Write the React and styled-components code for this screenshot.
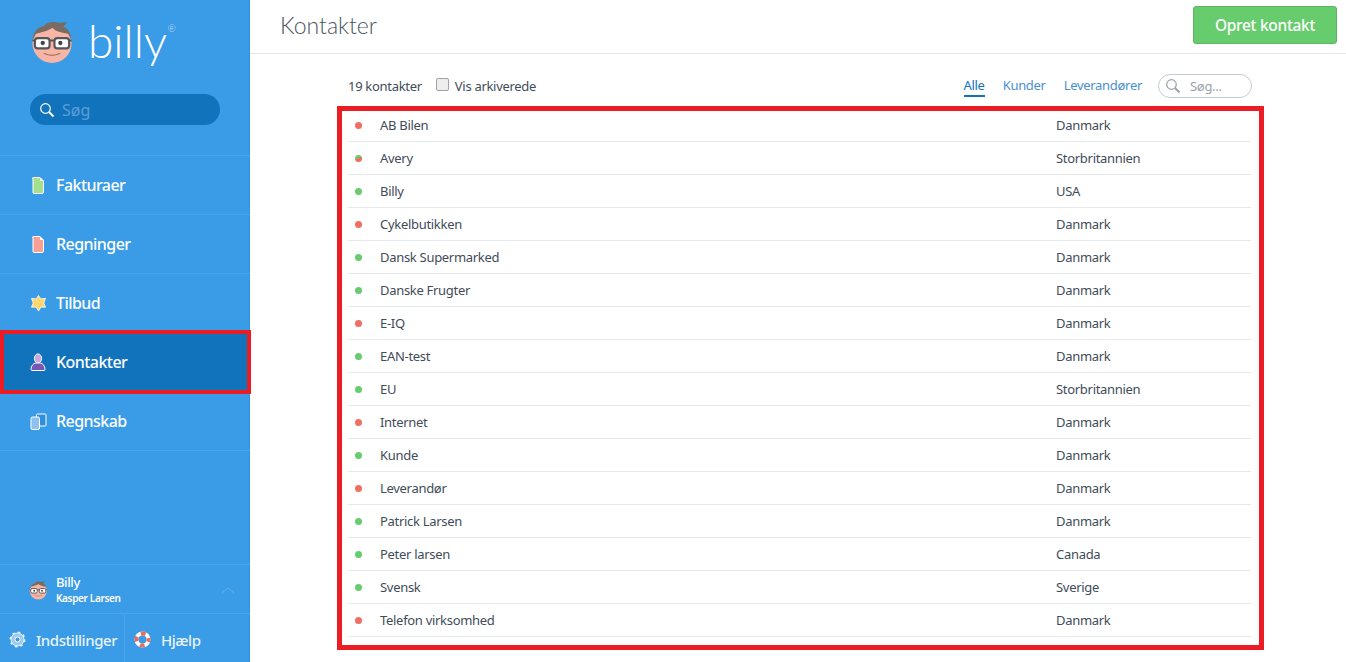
import React from "react";
import styled, { createGlobalStyle } from "styled-components";

const GlobalStyle = createGlobalStyle`
  html, body {
    margin: 0;
    padding: 0;
    height: 100%;
    overflow: hidden;
    background: #fff;
    font-family: "Noto Sans", "Open Sans", sans-serif;
  }
  * { box-sizing: border-box; }
`;

const Page = styled.div`
  display: flex;
  height: 662px;
  width: 1346px;
`;

const Sidebar = styled.aside`
  width: 250px;
  flex: none;
  background: #3a9be6;
  box-shadow: inset -1px 0 0 #3591dc;
  display: flex;
  flex-direction: column;
  color: #fff;
`;

const Logo = styled.div`
  display: flex;
  align-items: center;
  height: 94px;
  padding: 0 0 10px 31px;
`;

const LogoText = styled.span`
  font-family: "Lato", sans-serif;
  font-weight: 300;
  font-size: 46px;
  line-height: 1;
  margin-left: 14px;
  position: relative;
  top: -1px;
`;

const Registered = styled.sup`
  font-size: 10px;
  font-weight: 300;
  position: absolute;
  top: 5px;
  right: -9px;
  line-height: 1;
  opacity: 0.7;
`;

const SideSearch = styled.div`
  margin: 0 30px 0 30px;
  height: 31px;
  border-radius: 16px;
  background: #1273bd;
  display: flex;
  align-items: center;
  padding-left: 9px;
  gap: 7px;
  font-size: 16px;
  color: #5b9fd6;
`;

const Nav = styled.nav`
  margin-top: 30px;
  border-top: 1px solid #4aa4ea;
`;

const NavItem = styled.div`
  height: 59px;
  display: flex;
  align-items: center;
  padding-left: ${p => (p.$active ? "25px" : "29px")};
  gap: 9px;
  font-size: 16px;
  font-weight: 500;
  letter-spacing: -0.55px;
  border-bottom: 1px solid #4aa4ea;
  ${p => p.$active && `
    background: #1273bd;
    border: 4px solid #ec1c24;
    width: 251px;
    height: 64px;
    margin: -3px 0 -2px;
    position: relative;
  `}
`;

const IconSlot = styled.span`
  width: 18px;
  height: 18px;
  flex: none;
  display: flex;
  align-items: center;
  justify-content: center;
`;

const Spacer = styled.div`
  flex: 1;
`;

const User = styled.div`
  height: 50px;
  border-top: 1px solid #4aa4ea;
  border-bottom: 1px solid #4aa4ea;
  display: flex;
  align-items: center;
  padding: 2px 15px 0 29px;
  gap: 8px;
`;

const UserText = styled.div`
  flex: 1;
  display: flex;
  flex-direction: column;
  gap: 1px;
`;

const UserName = styled.span`
  font-size: 13px;
  font-weight: 500;
  line-height: 15px;
  letter-spacing: -0.4px;
`;

const UserCompany = styled.span`
  font-size: 10px;
  font-weight: 600;
  line-height: 14px;
  letter-spacing: -0.35px;
`;

const FooterBar = styled.div`
  height: 48px;
  display: flex;
`;

const FooterLink = styled.div`
  display: flex;
  align-items: center;
  gap: 10px;
  width: ${p => p.$width}px;
  padding: 3px 0 0 ${p => p.$pad}px;
  font-size: 15px;
  font-weight: 500;
  letter-spacing: -0.45px;
  color: #e8f4fd;
  & + & {
    border-left: 1px solid #4aa4ea;
  }
`;

const Main = styled.main`
  flex: 1;
  min-width: 0;
  display: flex;
  flex-direction: column;
`;

const Header = styled.header`
  height: 54px;
  flex: none;
  border-bottom: 1px solid #e3e6e8;
  display: flex;
  align-items: center;
  justify-content: space-between;
  padding: 0 9px 3px 30px;
`;

const Title = styled.h1`
  margin: 0;
  font-family: "Lato", sans-serif;
  font-weight: 300;
  font-size: 23px;
  color: #4a5561;
`;

const CreateButton = styled.button`
  width: 144px;
  height: 38px;
  background: #66cc6d;
  border: 1px solid #5bb562;
  border-radius: 3px;
  color: #fff;
  font-family: inherit;
  font-size: 15.5px;
  font-weight: 500;
  letter-spacing: -0.3px;
`;

const Content = styled.div`
  width: 927px;
  margin-left: 87px;
`;

const Toolbar = styled.div`
  height: 52px;
  display: flex;
  align-items: center;
  padding: 12px 12px 0 11px;
  font-size: 13px;
  letter-spacing: -0.3px;
  color: #3f4c59;
`;

const CheckBox = styled.input`
  appearance: none;
  width: 13px;
  height: 13px;
  margin: 0 6px 3px 14px;
  background: #eeeeee;
  border: 1px solid #a3a3a3;
  border-radius: 2px;
`;

const Tabs = styled.div`
  margin-left: auto;
  display: flex;
  align-items: center;
  gap: 18px;
`;

const Tab = styled.span`
  color: ${p => (p.$active ? "#1273bd" : "#4a90d0")};
  padding-bottom: 1px;
  border-bottom: 2px solid ${p => (p.$active ? "#1273bd" : "transparent")};
`;

const TableSearch = styled.div`
  width: 94px;
  height: 24px;
  border: 1px solid #c3cbd1;
  border-radius: 12px;
  display: flex;
  align-items: center;
  gap: 9px;
  padding-left: 6px;
  color: #9aa3ab;
  margin-left: -2px;
`;

const ListBox = styled.div`
  border: 5px solid #ec1c24;
  height: 544px;
  padding: 0 8px 0 6px;
`;

const Row = styled.div`
  height: 33px;
  display: flex;
  align-items: center;
  border-bottom: 1px solid #e6e9eb;
  font-size: 13px;
  letter-spacing: -0.3px;
  color: #3f4c59;
  &:first-child {
    height: 31px;
    padding-bottom: 2px;
  }
`;

const Dot = styled.span`
  width: 7px;
  height: 7px;
  border-radius: 50%;
  margin: 0 18px 0 7px;
  flex: none;
  background: ${p => p.$kind === "both"
    ? "linear-gradient(160deg, #66cc6d 0 45%, #ef6f61 45% 100%)"
    : p.$kind === "green" ? "#66cc6d" : "#ef6f61"};
`;

const Name = styled.span`
  width: 676px;
  flex: none;
`;

const FaceIcon = ({ size }) => (
  <svg width={size} height={size} viewBox="0 0 44 44">
    <circle cx="21.500" cy="23" r="20" fill="#f6b5a5" />
    <path d="M1.500 20C2 11 7 6 13 5 16 1 24 0 29 2l8-1-4 5c5 2 8 7 8 13l-3-6C30 12 24 10 22 7 18 10 10 12 5 13z" fill="#7b6a60" />
    <rect x="4" y="17.500" width="15" height="10.500" rx="3" fill="#fff" stroke="#55565a" strokeWidth="2.200" />
    <rect x="24" y="17.500" width="15" height="10.500" rx="3" fill="#fff" stroke="#55565a" strokeWidth="2.200" />
    <path d="M19 20h5M1.500 19.500L4 20.500M39 20.500l2.500-1" stroke="#55565a" strokeWidth="2" />
    <circle cx="12" cy="22.500" r="2.200" fill="#444" />
    <circle cx="30" cy="22.500" r="2.200" fill="#444" />
    <path d="M13 33c5 2.500 12 2.500 17 0" stroke="#a8705f" strokeWidth="1.200" fill="none" />
  </svg>
);

const SearchIcon = ({ color, size = 16 }) => (
  <svg width={size} height={size} viewBox="0 0 16 16" fill="none">
    <circle cx="6.500" cy="6.500" r="4.800" stroke={color} strokeWidth="1.200" />
    <path d="M10 10l4.500 4.500" stroke={color} strokeWidth="2" />
  </svg>
);

const DocIcon = ({ fill }) => (
  <svg width="12" height="17" viewBox="0 0 12 17">
    <path d="M1.500.5h6.500l3.500 3.500v11a1.500 1.500 0 0 1-1.500 1.500h-8.500a1.500 1.500 0 0 1-.5-1.500v-13a.5.5 0 0 1 .5-1.500z" fill={fill} stroke="#fff" />
    <path d="M8 .5v3.500h3.500z" fill="#fff" />
  </svg>
);

const StarIcon = () => (
  <svg width="17" height="17" viewBox="0 0 17 17">
    <path d="M8.500.5l2.400 3.400 4.600-.5-1.700 4.600 1.700 4.200-4.600-.1-2.400 4-2.400-4-4.600.1 1.700-4.200-1.700-4.600 4.600.5z" fill="#ffd76a" stroke="#fff" strokeWidth="0.800" />
  </svg>
);

const PersonIcon = () => (
  <svg width="16" height="18" viewBox="0 0 16 18">
    <ellipse cx="8" cy="5.500" rx="3.600" ry="4.600" fill="#c9a8e8" stroke="#fff" />
    <path d="M1 16.500c0-4 2.500-6 4.500-6.500h5c2 .5 4.500 2.500 4.500 6.500 0 .7-.5 1-1 1h-12c-.5 0-1-.3-1-1z" fill="#7a55b5" stroke="#fff" />
  </svg>
);

const CopyIcon = () => (
  <svg width="17" height="17" viewBox="0 0 17 17">
    <rect x="6.500" y="1" width="9.500" height="12" rx="1" fill="#2f8fdc" stroke="#fff" />
    <rect x="1" y="4" width="8.500" height="12.500" rx="1.500" fill="#8fc1ee" stroke="#fff" />
  </svg>
);

const GearIcon = () => (
  <svg width="17" height="17" viewBox="0 0 17 17">
    <circle cx="8.500" cy="8.500" r="6.500" fill="#9ccbf0" stroke="#dff0fc" strokeWidth="1" />
    <circle cx="8.500" cy="8.500" r="7" fill="none" stroke="#dff0fc" strokeWidth="2" strokeDasharray="2.500 3" />
    <circle cx="8.500" cy="8.500" r="2.500" fill="#3a9be6" stroke="#fff" />
  </svg>
);

const BuoyIcon = () => (
  <svg width="17" height="17" viewBox="0 0 17 17">
    <circle cx="8.500" cy="8.500" r="6" fill="none" stroke="#fff" strokeWidth="4" />
    <circle cx="8.500" cy="8.500" r="6" fill="none" stroke="#ee6a5a" strokeWidth="4" strokeDasharray="4.700 4.725" strokeDashoffset="2.350" />
  </svg>
);

const Chevron = () => (
  <svg width="14" height="7" viewBox="0 0 14 7" fill="none">
    <path d="M.5 6.500L7 .8l6.500 5.700" stroke="#62b0ec" strokeWidth="1" />
  </svg>
);

const navItems = [
  { label: "Fakturaer", icon: <DocIcon fill="#a6e08e" /> },
  { label: "Regninger", icon: <DocIcon fill="#f8a093" /> },
  { label: "Tilbud", icon: <StarIcon /> },
  { label: "Kontakter", icon: <PersonIcon />, active: true },
  { label: "Regnskab", icon: <CopyIcon /> },
];

const contacts = [
  ["AB Bilen", "Danmark", "red"],
  ["Avery", "Storbritannien", "both"],
  ["Billy", "USA", "green"],
  ["Cykelbutikken", "Danmark", "red"],
  ["Dansk Supermarked", "Danmark", "green"],
  ["Danske Frugter", "Danmark", "green"],
  ["E-IQ", "Danmark", "red"],
  ["EAN-test", "Danmark", "green"],
  ["EU", "Storbritannien", "green"],
  ["Internet", "Danmark", "red"],
  ["Kunde", "Danmark", "green"],
  ["Leverandør", "Danmark", "red"],
  ["Patrick Larsen", "Danmark", "green"],
  ["Peter larsen", "Canada", "green"],
  ["Svensk", "Sverige", "green"],
  ["Telefon virksomhed", "Danmark", "red"],
];

export default function App() {
  return (
    <Page>
      <GlobalStyle />
      <Sidebar>
        <Logo>
          <FaceIcon size={43} />
          <LogoText>billy<Registered>®</Registered></LogoText>
        </Logo>
        <SideSearch>
          <SearchIcon color="#fff" />
          Søg
        </SideSearch>
        <Nav>
          {navItems.map(item => (
            <NavItem key={item.label} $active={item.active}>
              <IconSlot>{item.icon}</IconSlot>
              {item.label}
            </NavItem>
          ))}
        </Nav>
        <Spacer />
        <User>
          <FaceIcon size={19} />
          <UserText>
            <UserName>Billy</UserName>
            <UserCompany>Kasper Larsen</UserCompany>
          </UserText>
          <Chevron />
        </User>
        <FooterBar>
          <FooterLink $width={124} $pad={9}><GearIcon />Indstillinger</FooterLink>
          <FooterLink $width={126} $pad={9}><BuoyIcon />Hjælp</FooterLink>
        </FooterBar>
      </Sidebar>
      <Main>
        <Header>
          <Title>Kontakter</Title>
          <CreateButton>Opret kontakt</CreateButton>
        </Header>
        <Content>
          <Toolbar>
            19 kontakter
            <CheckBox type="checkbox" />
            Vis arkiverede
            <Tabs>
              <Tab $active>Alle</Tab>
              <Tab>Kunder</Tab>
              <Tab>Leverandører</Tab>
              <TableSearch>
                <SearchIcon color="#9aa3ab" />
                Søg...
              </TableSearch>
            </Tabs>
          </Toolbar>
          <ListBox>
            {contacts.map(([name, country, kind]) => (
              <Row key={name}>
                <Dot $kind={kind} />
                <Name>{name}</Name>
                {country}
              </Row>
            ))}
          </ListBox>
        </Content>
      </Main>
    </Page>
  );
}
